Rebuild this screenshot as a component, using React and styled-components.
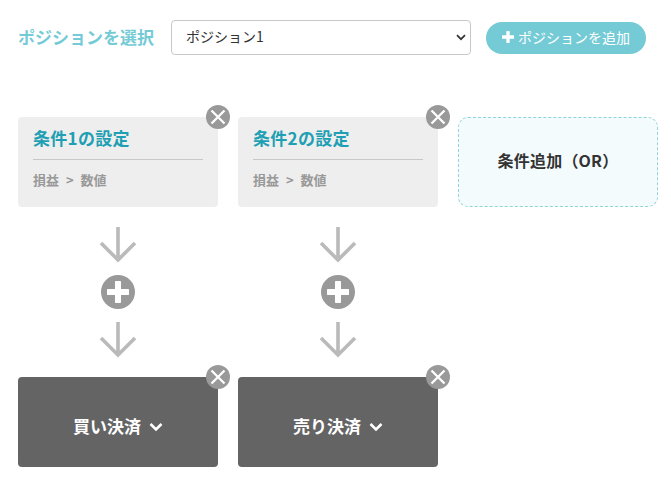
import React from "react";
import styled, { createGlobalStyle } from "styled-components";

const Global = createGlobalStyle`
  html, body { margin: 0; padding: 0; background: #fff; }
  body { font-family: "Noto Sans CJK JP", "Noto Sans", sans-serif; }
`;

const Page = styled.div`
  width: 671px;
  height: 484px;
  overflow: hidden;
  padding: 20px 0 0 18px;
  box-sizing: border-box;
`;

const Toolbar = styled.div`
  display: flex;
  align-items: center;
  height: 35px;
`;

const Label = styled.div`
  width: 153px;
  font-size: 17px;
  font-weight: 700;
  color: #74cbd6;
  white-space: nowrap;
  line-height: 33px;
  height: 35px;
`;

const SelectWrap = styled.div`
  position: relative;
  width: 300px;
  height: 35px;
`;

const PositionSelect = styled.select`
  appearance: none;
  width: 100%;
  height: 100%;
  box-sizing: border-box;
  padding: 0 10px 3px 14px;
  border: 1px solid #c8c8c8;
  border-radius: 4px;
  background-color: #fff;
  color: #333;
  font-family: inherit;
  font-size: 14px;
`;

const SelectCaret = styled.svg`
  position: absolute;
  right: 5px;
  top: 14px;
  pointer-events: none;
`;

const AddButton = styled.button`
  margin-left: 15px;
  width: 160px;
  height: 32px;
  border: 0;
  border-radius: 16px;
  background: #74cbd6;
  color: #fff;
  font-family: inherit;
  font-size: 14px;
  line-height: 28px;
  display: flex;
  align-items: center;
  justify-content: center;
  gap: 4px;
  padding: 0 0 2px;
  white-space: nowrap;
`;

const Grid = styled.div`
  display: grid;
  grid-template-columns: repeat(3, 200px);
  column-gap: 20px;
  margin-top: 62px;
  align-items: start;
`;

const Column = styled.div`
  display: flex;
  flex-direction: column;
  align-items: center;
`;

const Card = styled.div`
  position: relative;
  width: 200px;
  height: 90px;
  box-sizing: border-box;
  padding: 10px 15px 0;
  background: #eeeeee;
  border-radius: 4px;
`;

const Title = styled.div`
  font-size: 17px;
  font-weight: 700;
  letter-spacing: 0.3px;
  line-height: 21px;
  color: #1f9fb3;
  padding-bottom: 11px;
  border-bottom: 1px solid #c8c8c8;
  white-space: nowrap;
`;

const Sub = styled.div`
  margin-top: 11px;
  font-size: 13px;
  font-weight: 700;
  line-height: 18px;
  color: #999;
  word-spacing: 4px;
  white-space: pre;
`;

const AddCard = styled.div`
  width: 200px;
  height: 90px;
  box-sizing: border-box;
  border: 1px dashed #92d2da;
  border-radius: 10px;
  background: #f3fbfd;
  display: flex;
  align-items: center;
  justify-content: center;
  font-size: 16px;
  font-weight: 700;
  letter-spacing: 0.2px;
  color: #333;
  padding-bottom: 4px;
`;

const Close = styled.div`
  position: absolute;
  top: -12px;
  right: -12px;
  width: 24px;
  height: 24px;
  border-radius: 50%;
  background: #999;
  display: flex;
  align-items: center;
  justify-content: center;
`;

const Flow = styled.div`
  display: flex;
  flex-direction: column;
  align-items: center;
  padding-top: 20px;
  height: 170px;
  box-sizing: border-box;
`;

const PlusCircle = styled.div`
  width: 34px;
  height: 34px;
  margin: 12px 0 13px;
  border-radius: 50%;
  background: #999;
  display: flex;
  align-items: center;
  justify-content: center;
`;

const Action = styled.div`
  position: relative;
  width: 200px;
  height: 90px;
  box-sizing: border-box;
  padding-top: 6px;
  background: #646464;
  border-radius: 4px;
  display: flex;
  align-items: center;
  justify-content: center;
  gap: 8px;
  color: #fff;
  font-size: 17px;
  font-weight: 700;
`;

const ActionChevron = styled.span`
  display: flex;
  padding-top: 3px;
`;

const X = () => (
  <svg width="16" height="16" viewBox="0 0 16 16">
    <path d="M1.5 1.5L14.5 14.5M14.5 1.5L1.5 14.5" stroke="#fff" strokeWidth="2.3" />
  </svg>
);

const Arrow = () => (
  <svg width="38" height="36" viewBox="0 0 38 36" style={{ display: "block" }}>
    <path d="M19 0V33M2 16L19 33L36 16" fill="none" stroke="#bababa" strokeWidth="3.6" />
  </svg>
);

const Plus = ({ size, thick }) => (
  <svg width={size} height={size} viewBox="0 0 20 20">
    <path d="M10 1.5V18.5M1.5 10H18.5" stroke="#fff" strokeWidth={thick} strokeLinecap="round" />
  </svg>
);

const Chevron = () => (
  <svg width="14" height="10" viewBox="0 0 14 10">
    <path d="M1.5 2L7 7.5L12.5 2" fill="none" stroke="#fff" strokeWidth="2.6" />
  </svg>
);

const columns = [
  { title: "条件1の設定", action: "買い決済" },
  { title: "条件2の設定", action: "売り決済" },
];

export default function App() {
  return (
    <Page>
      <Global />
      <Toolbar>
        <Label>ポジションを選択</Label>
        <SelectWrap>
          <PositionSelect defaultValue="1">
            <option value="1">ポジション1</option>
          </PositionSelect>
          <SelectCaret width="10" height="7" viewBox="0 0 10 7">
            <path d="M1 1.2L5 5.2L9 1.2" fill="none" stroke="#333" strokeWidth="1.7" />
          </SelectCaret>
        </SelectWrap>
        <AddButton>
          <Plus size={12} thick={5.5} />
          ポジションを追加
        </AddButton>
      </Toolbar>
      <Grid>
        {columns.map((c) => (
          <Column key={c.title}>
            <Card>
              <Title>{c.title}</Title>
              <Sub>損益 &gt; 数値</Sub>
              <Close><X /></Close>
            </Card>
            <Flow>
              <Arrow />
              <PlusCircle><Plus size={22} thick={5.5} /></PlusCircle>
              <Arrow />
            </Flow>
            <Action>
              {c.action}
              <ActionChevron><Chevron /></ActionChevron>
              <Close><X /></Close>
            </Action>
          </Column>
        ))}
        <AddCard>条件追加（OR）</AddCard>
      </Grid>
    </Page>
  );
}
